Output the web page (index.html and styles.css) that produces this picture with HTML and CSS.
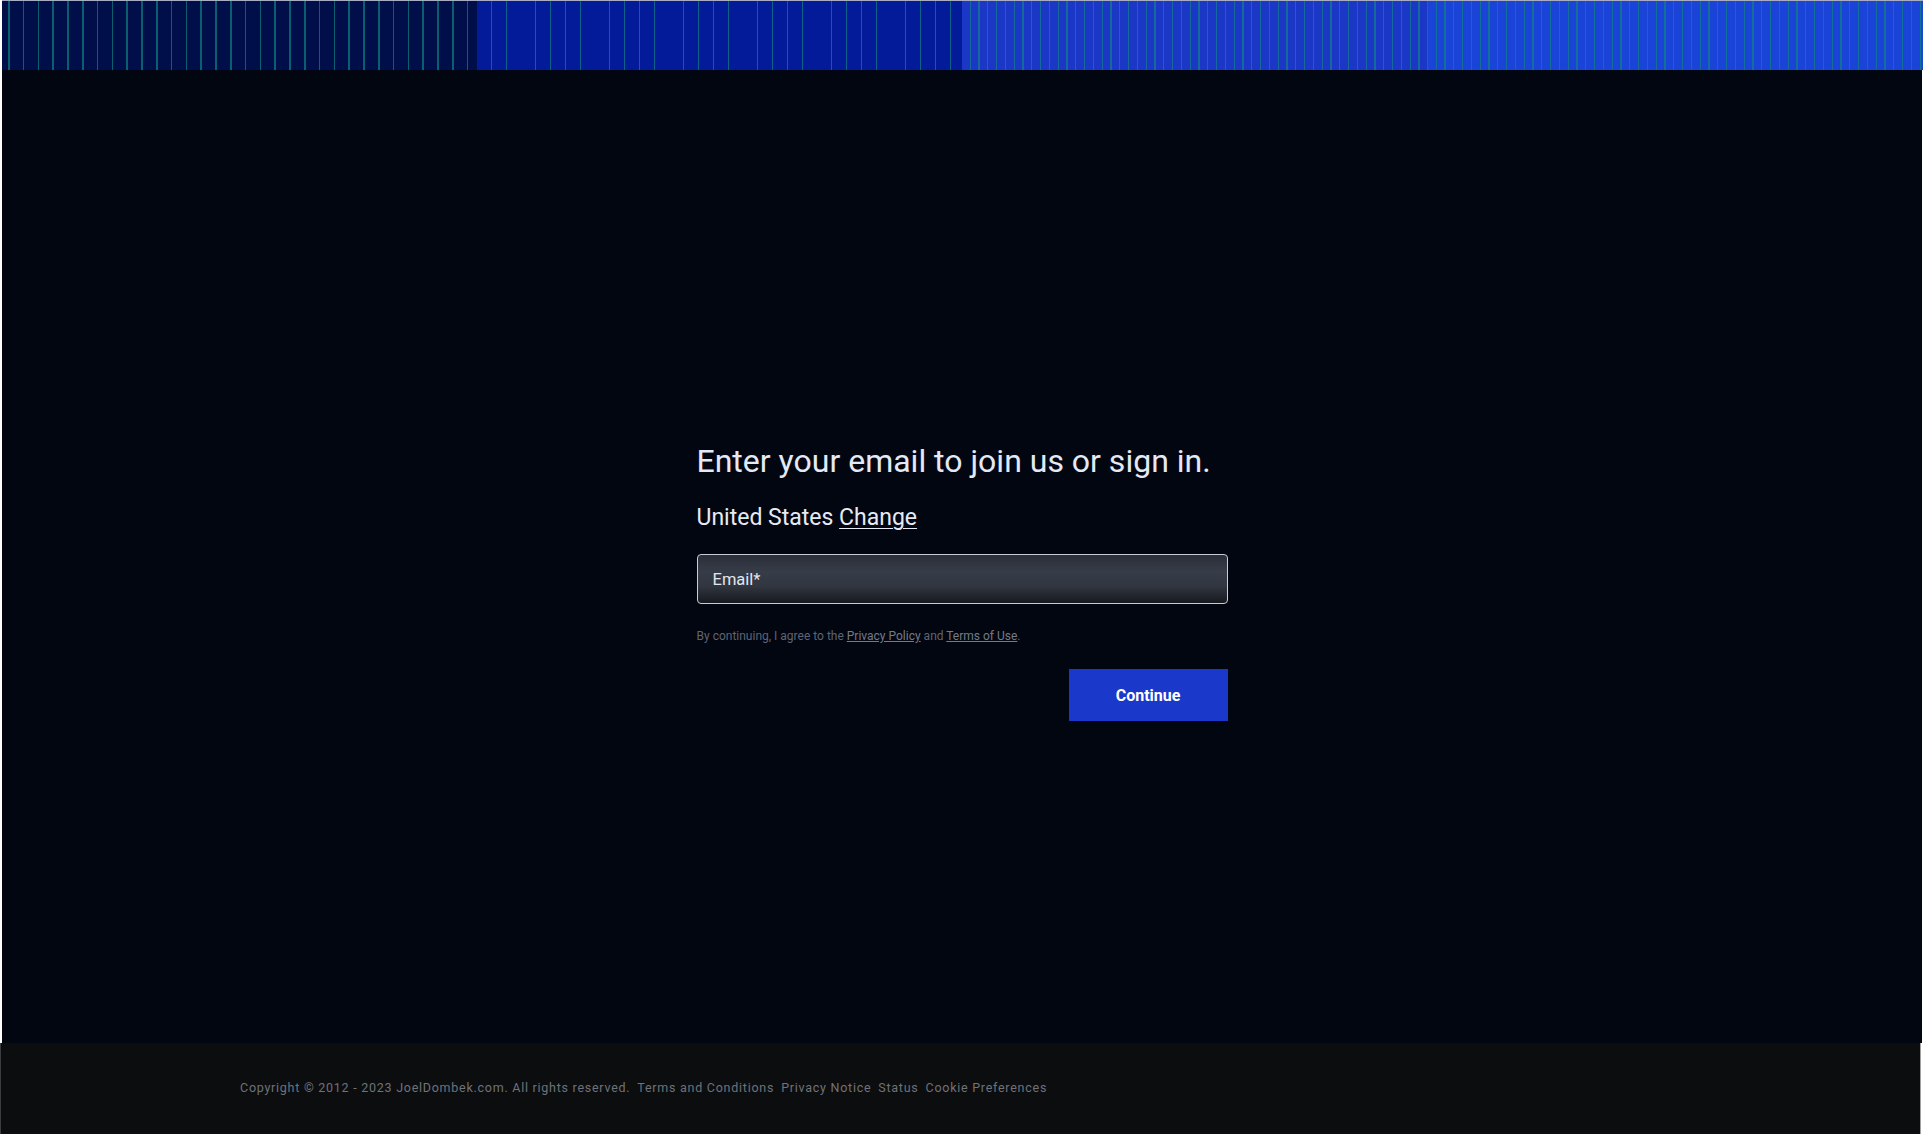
FILE: index.html
```html
<!DOCTYPE html>
<html lang="en">
<head>
<meta charset="utf-8">
<title>Sign in</title>
<link rel="stylesheet" href="styles.css">
</head>
<body>
<header class="banner">
  <div class="band band-1"></div>
  <div class="band band-2"></div>
  <div class="band band-3"></div>
  <div class="band band-4"></div>
</header>
<main class="main">
  <form class="signin">
    <h1 class="title">Enter your email to join us or sign in.</h1>
    <p class="country">United States <a class="country-link" href="#">Change</a></p>
    <label class="field">
      <input class="field-input" type="email" placeholder="Email*">
    </label>
    <p class="legal">By continuing, I agree to the <a class="legal-link" href="#">Privacy Policy</a> and <a class="legal-link" href="#">Terms of Use</a>.</p>
    <div class="actions">
      <button class="btn" type="button">Continue</button>
    </div>
  </form>
</main>
<footer class="footer">
  <span class="foot-item">Copyright © 2012 - 2023 JoelDombek.com. All rights reserved.</span>
  <a class="foot-item" href="#">Terms and Conditions</a>
  <a class="foot-item" href="#">Privacy Notice</a>
  <a class="foot-item" href="#">Status</a>
  <a class="foot-item" href="#">Cookie Preferences</a>
</footer>
</body>
</html>
```
FILE: styles.css
```css
* { box-sizing: border-box; }
html, body { margin: 0; padding: 0; }
body {
  background: #ffffff;
  font-family: Roboto, "Liberation Sans", Arial, sans-serif;
  width: 1923px;
  height: 1134px;
  overflow: hidden;
}

.banner {
  display: flex;
  height: 70px;
  margin: 0 0 0 2px;
  border-top: 1px solid #a7abc4;
}
.band { height: 100%; }
.band-1 {
  width: 475px;
  background: repeating-linear-gradient(90deg, #000f4a 0, #000f4a 6px, #0a5f6e 6px, #0a5f6e 7.5px, #000f4a 7.5px, #000f4a 14.8px);
}
.band-2 {
  width: 485px;
  background: repeating-linear-gradient(90deg, #031b98 0, #031b98 14px, #0b6488 14px, #0b6488 14.8px);
}
.band-3 {
  width: 466px;
  background: repeating-linear-gradient(90deg, #1a37c6 0, #1a37c6 7.6px, #146a98 7.6px, #146a98 8.8px);
}
.band-4 {
  flex: 1;
  background: repeating-linear-gradient(90deg, #1a43d8 0, #1a43d8 7.6px, #127098 7.6px, #127098 8.8px);
}

.main {
  height: 973px;
  margin: 0 1px 0 2px;
  background: #020611;
  display: flex;
  justify-content: center;
  padding-top: 372px;
}
.signin {
  width: 531px;
  display: flex;
  flex-direction: column;
}
.title {
  margin: 0;
  font-size: 32px;
  line-height: 38px;
  font-weight: 400;
  color: #e4e9f6;
}
.country {
  margin: 23px 0 0;
  font-size: 23px;
  line-height: 30px;
  color: #e6eaf4;
}
.country-link {
  color: #e6eaf4;
  text-decoration: underline;
  text-underline-offset: 3px;
  text-decoration-thickness: 1px;
}
.field {
  display: block;
  margin-top: 21px;
}
.field-input {
  display: block;
  width: 100%;
  height: 50px;
  border: 1px solid #c8ccd6;
  border-radius: 4px;
  padding: 0 15px;
  background: linear-gradient(180deg, #2a2e38 0%, #363c48 35%, #31363f 65%, #16191f 100%);
  font-family: Roboto, "Liberation Sans", Arial, sans-serif;
  font-size: 16.5px;
  color: #e8ebf2;
  outline: none;
}
.field-input::placeholder { color: #e2e6ee; opacity: 1; }
.legal {
  margin: 24px 0 0;
  font-size: 12px;
  line-height: 16px;
  color: #5f6472;
}
.legal-link {
  color: #757a87;
  text-decoration: underline;
}
.actions {
  display: flex;
  justify-content: flex-end;
  margin-top: 25px;
}
.btn {
  width: 159px;
  height: 52px;
  border: 0;
  background: #1a38c9;
  color: #ffffff;
  font-family: Roboto, "Liberation Sans", Arial, sans-serif;
  font-size: 16px;
  font-weight: 700;
  cursor: pointer;
}

.footer {
  height: 91px;
  margin: 0 2px 0 0;
  background: #0c0d0f;
  border-left: 1px solid #3d3d3f;
  border-right: 1px solid #a0a0a0;
  display: flex;
  align-items: center;
  gap: 7px;
  padding: 0 0 2px 239px;
}
.foot-item {
  font-size: 12.5px;
  letter-spacing: 0.74px;
  color: #6f727a;
  text-decoration: none;
  white-space: nowrap;
}
```
